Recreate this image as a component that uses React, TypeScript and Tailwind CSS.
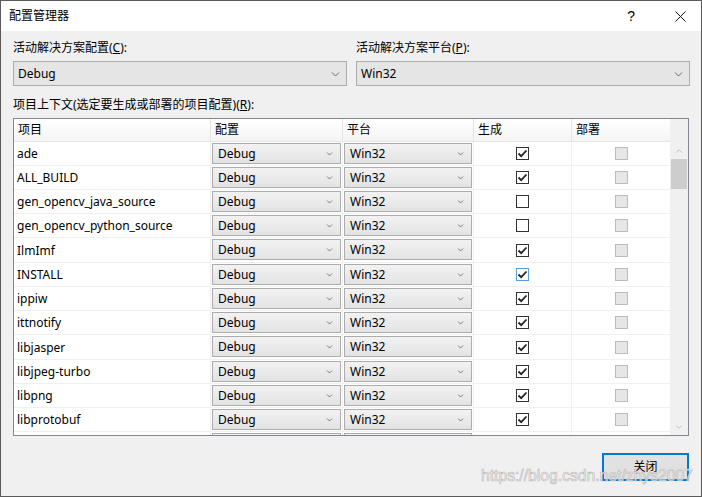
import { ChevronDown, ChevronUp } from 'lucide-react';

type Project = {
  name: string;
  build: boolean;
  tall?: boolean;
  hover?: boolean;
};

const projects: Project[] = [
  { name: 'ade', build: true },
  { name: 'ALL_BUILD', build: true },
  { name: 'gen_opencv_java_source', build: false },
  { name: 'gen_opencv_python_source', build: false },
  { name: 'IlmImf', build: true, tall: true },
  { name: 'INSTALL', build: true, hover: true },
  { name: 'ippiw', build: true },
  { name: 'ittnotify', build: true },
  { name: 'libjasper', build: true, tall: true },
  { name: 'libjpeg-turbo', build: true },
  { name: 'libpng', build: true },
  { name: 'libprotobuf', build: true },
];

function Chevron() {
  return (
    <svg width="9" height="6" viewBox="0 0 9 6" className="shrink-0">
      <path d="M1 1.5 L4.5 5 L8 1.5" fill="none" stroke="#6b6b6b" strokeWidth="1" />
    </svg>
  );
}

function SmallChevron() {
  return (
    <svg width="7" height="5" viewBox="0 0 7 5" className="shrink-0">
      <path d="M1 1.5 L3.5 4 L6 1.5" fill="none" stroke="#7a7a7a" strokeWidth="1" />
    </svg>
  );
}

/** Combo box above the grid */
function Combo({ value }: { value: string }) {
  return (
    <div className="h-[25px] border border-[#adadad] bg-[#e5e5e5] flex items-center justify-between pl-[4px] pr-[6px]">
      <span>{value}</span>
      <Chevron />
    </div>
  );
}

/** Combo inside a grid cell */
function CellCombo({ value, width }: { value?: string; width: string }) {
  return (
    <div
      className={`${width} h-[21px] mt-[1px] ml-[1px] border border-[#acacac] bg-gradient-to-b from-[#f2f2f2] to-[#e3e3e3] flex items-center justify-between pl-[5px] pr-[7px]`}
    >
      <span className="pt-[1px]">{value}</span>
      <SmallChevron />
    </div>
  );
}

function CheckBox({ checked, hover }: { checked: boolean; hover?: boolean }) {
  return (
    <div
      className={`w-[13px] h-[13px] border bg-white flex items-center justify-center ${
        hover ? 'border-[#569de5]' : 'border-[#333333]'
      }`}
    >
      {checked && (
        <svg width="11" height="11" viewBox="0 0 11 11">
          <path d="M1.5 5.5 L4.2 8.2 L9.5 2.5" fill="none" stroke="#222" strokeWidth="1.8" />
        </svg>
      )}
    </div>
  );
}

export default function App() {
  return (
    <div className="w-[702px] h-[497px] border border-[#5a5a5a] bg-[#f0f0f0] flex flex-col relative overflow-hidden text-[12px] text-black font-['Noto_Sans','Noto_Sans_CJK_SC',sans-serif]">
      {/* Title bar */}
      <div className="h-[30px] bg-white flex items-center pl-[8px] shrink-0">
        <span className="text-[12px]">配置管理器</span>
        <span className="ml-auto mr-[40px] text-[14px] font-['Liberation_Sans',sans-serif]">?</span>
        <svg width="11" height="11" viewBox="0 0 11 11" className="mr-[15px]">
          <path d="M0.5 0.5 L10.5 10.5 M10.5 0.5 L0.5 10.5" stroke="#111" strokeWidth="1" />
        </svg>
      </div>

      {/* Body */}
      <div className="flex-1 pl-[12px] flex flex-col">
        <div className="flex">
          <div className="w-[334px]">
            <div className="mt-[9px] h-[16px] leading-[16px]">
              活动解决方案配置(<u>C</u>):
            </div>
            <div className="mt-[5px]">
              <Combo value="Debug" />
            </div>
          </div>
          <div className="w-[334px] ml-[9px]">
            <div className="mt-[9px] h-[16px] leading-[16px]">
              活动解决方案平台(<u>P</u>):
            </div>
            <div className="mt-[5px]">
              <Combo value="Win32" />
            </div>
          </div>
        </div>

        <div className="mt-[11px] h-[16px] leading-[16px]">
          项目上下文(选定要生成或部署的项目配置)(<u>R</u>):
        </div>

        {/* Grid */}
        <div className="mt-[5px] w-[676px] h-[318px] border border-[#828790] bg-white flex shrink-0">
          <div className="w-[656px] overflow-hidden">
            {/* Header */}
            <div className="h-[23px] flex border-b border-[#e5e5e5] bg-gradient-to-b from-white to-[#f4f4f4]">
              <div className="w-[197px] border-r border-[#e5e5e5] pl-[4px] flex items-center">项目</div>
              <div className="w-[132px] border-r border-[#e5e5e5] pl-[4px] flex items-center">配置</div>
              <div className="w-[131px] border-r border-[#e5e5e5] pl-[4px] flex items-center">平台</div>
              <div className="w-[98px] border-r border-[#e5e5e5] pl-[4px] flex items-center">生成</div>
              <div className="w-[98px] pl-[4px] flex items-center">部署</div>
            </div>

            {/* Rows */}
            {projects.map(p => (
              <div
                key={p.name}
                className={`flex border-b border-[#f0f0f0] ${p.tall ? 'h-[25px]' : 'h-[24px]'}`}
              >
                <div className="w-[197px] border-r border-[#f0f0f0] pl-[3px] pt-[1px] flex items-center">
                  {p.name}
                </div>
                <div className="w-[132px] border-r border-[#f0f0f0]">
                  <CellCombo value="Debug" width="w-[129px]" />
                </div>
                <div className="w-[131px] border-r border-[#f0f0f0]">
                  <CellCombo value="Win32" width="w-[128px]" />
                </div>
                <div className="w-[98px] border-r border-[#f0f0f0] flex items-center justify-center">
                  <CheckBox checked={p.build} hover={p.hover} />
                </div>
                <div className="w-[98px] flex items-center justify-center">
                  <div className="w-[13px] h-[13px] border border-[#bcbcbc] bg-[#e6e6e6]" />
                </div>
              </div>
            ))}

            {/* Next row, cut off by the grid edge */}
            <div className="flex h-[24px]">
              <div className="w-[197px] border-r border-[#f0f0f0]" />
              <div className="w-[132px] border-r border-[#f0f0f0]">
                <CellCombo width="w-[129px]" />
              </div>
              <div className="w-[131px] border-r border-[#f0f0f0]">
                <CellCombo width="w-[128px]" />
              </div>
              <div className="w-[98px] border-r border-[#f0f0f0]" />
            </div>
          </div>

          {/* Scrollbar */}
          <div className="w-[18px] bg-[#f0f0f0] flex flex-col">
            <div className="h-[23px]" />
            <div className="h-[17px] flex items-center justify-center">
              <ChevronUp size={10} strokeWidth={1.5} className="text-[#a3a3a3]" />
            </div>
            <div className="h-[30px] mx-[1px] bg-[#cdcdcd]" />
            <div className="flex-1" />
            <div className="h-[17px] flex items-center justify-center">
              <ChevronDown size={10} strokeWidth={1.5} className="text-[#a3a3a3]" />
            </div>
          </div>
        </div>

        {/* Footer */}
        <div className="w-[676px] flex justify-end mt-[17px]">
          <button className="w-[87px] h-[28px] border-2 border-[#0078d7] bg-[#e1e1e1] flex items-center justify-center">
            关闭
          </button>
        </div>
      </div>

      {/* Watermark */}
      <div className="absolute left-[480px] top-[466px] text-[15.7px] leading-[18px] font-['Liberation_Sans',sans-serif] text-white/70 [-webkit-text-stroke:0.7px_#bdbdbd] pointer-events-none whitespace-nowrap">
        https://blog.csdn.net/zhys2007
      </div>
    </div>
  );
}
